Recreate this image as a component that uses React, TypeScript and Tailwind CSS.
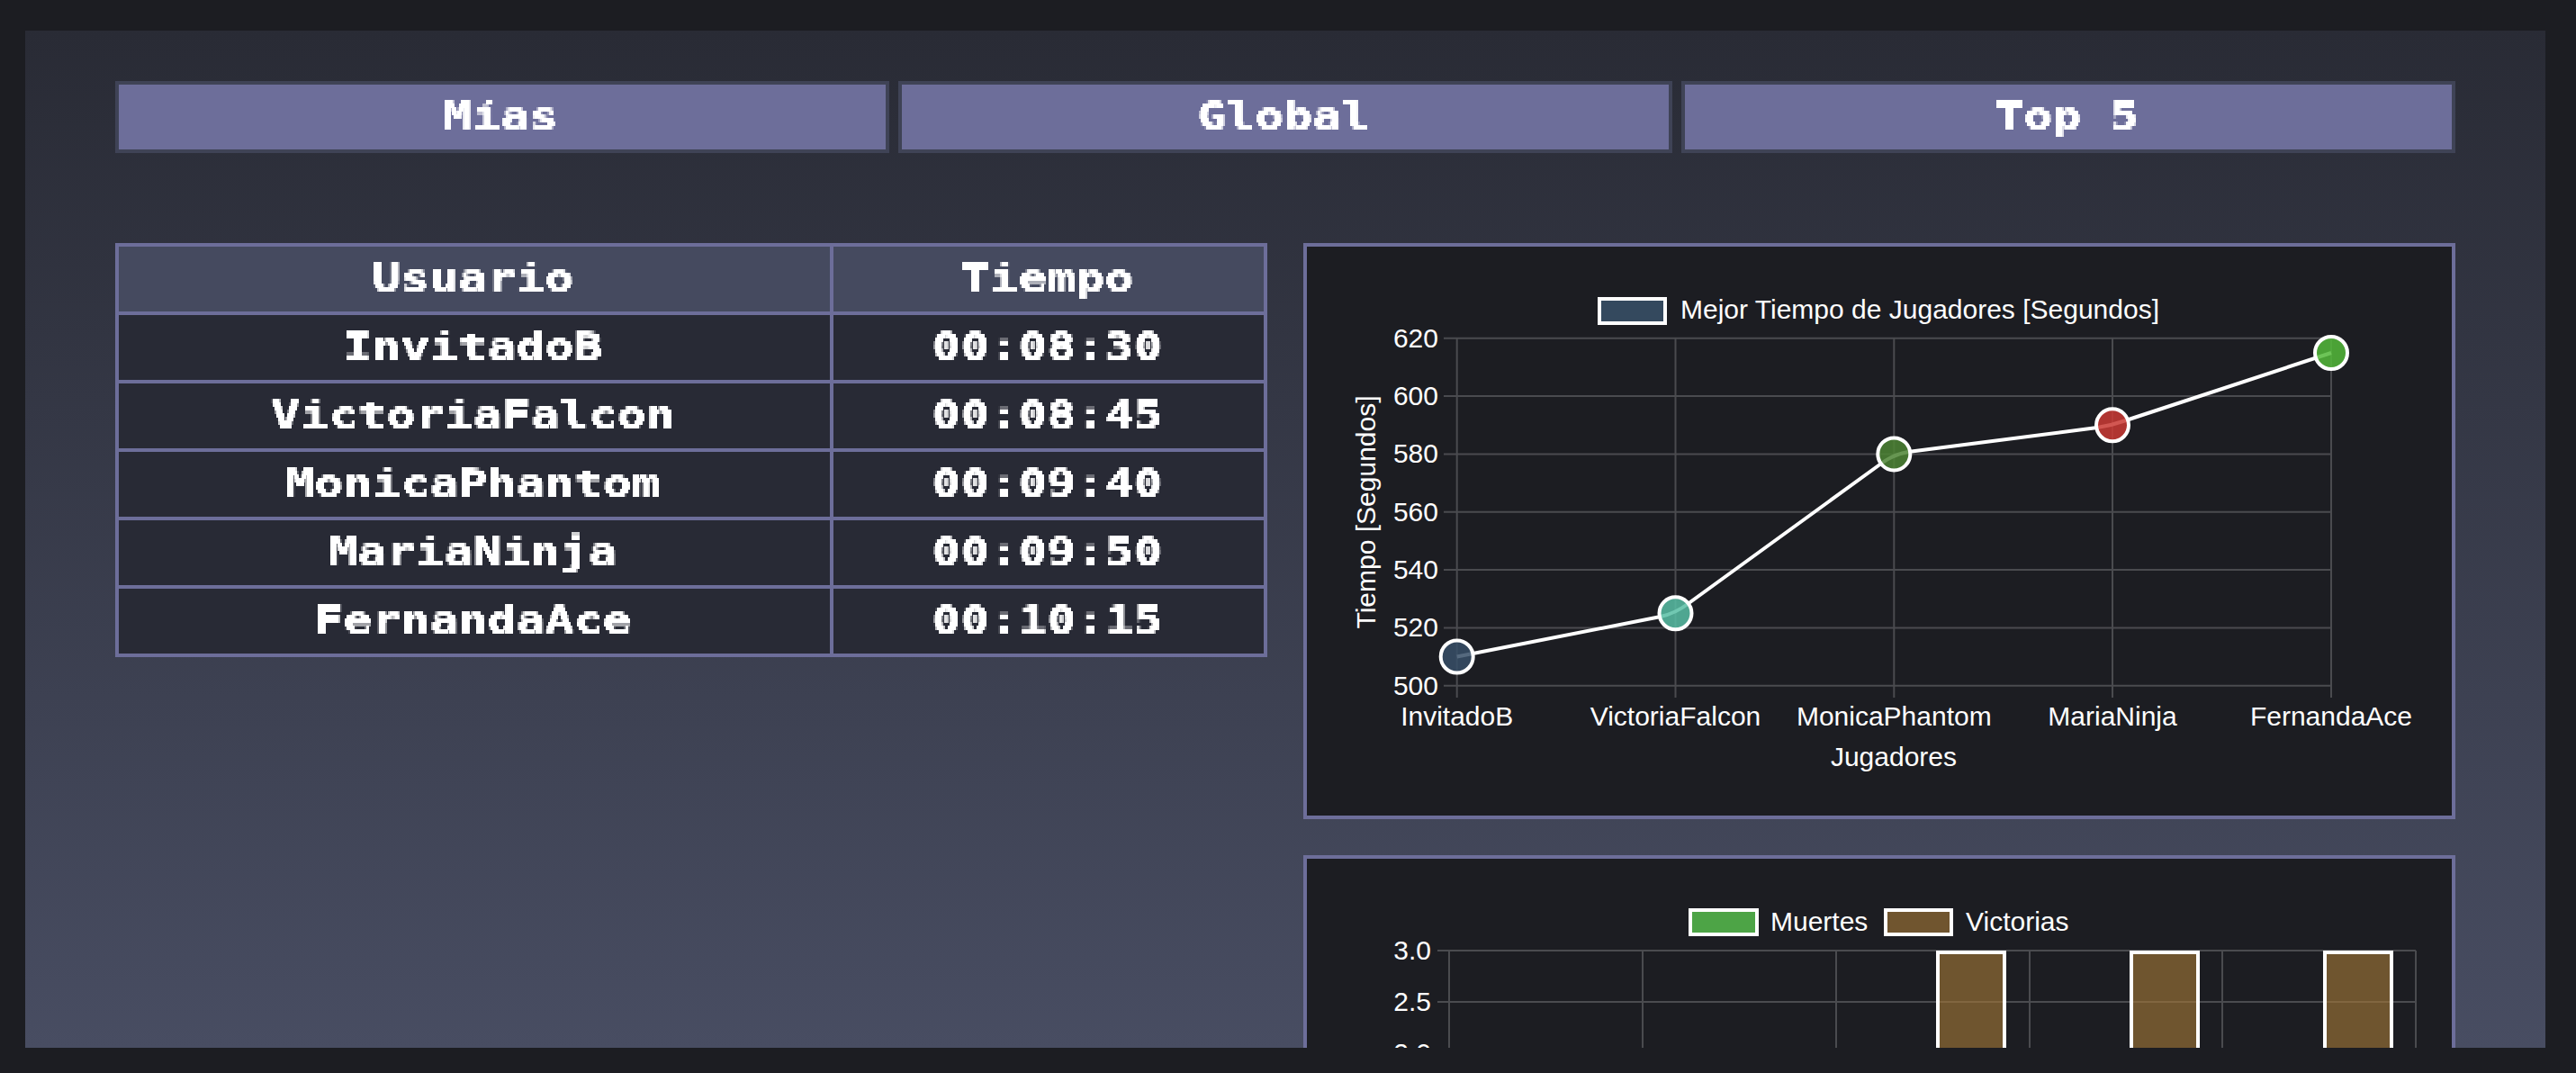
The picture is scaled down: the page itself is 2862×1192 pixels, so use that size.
import React from 'react';

const sans = '"Liberation Sans", Arial, sans-serif';

const rows = [
  ['InvitadoB', '00:08:30'],
  ['VictoriaFalcon', '00:08:45'],
  ['MonicaPhantom', '00:09:40'],
  ['MariaNinja', '00:09:50'],
  ['FernandaAce', '00:10:15'],
];

const PixelText: React.FC<{ children: React.ReactNode }> = ({ children }) => (
  <span className="inline-block pb-[2px] pr-[3px] [filter:url(#pixel-text)]">
    <span className="inline-block scale-x-[1.33] font-['DejaVu_Sans_Mono',monospace] text-[40px] font-bold leading-[44px] text-white">
      {children}
    </span>
  </span>
);

const LineChart: React.FC = () => {
  const xs = [1618.7, 1861.5, 2104.3, 2347, 2590];
  const ys = [375.7, 440, 504.4, 568.8, 633, 697.4, 761.7];
  const ticks = ['620', '600', '580', '560', '540', '520', '500'];
  const names = ['InvitadoB', 'VictoriaFalcon', 'MonicaPhantom', 'MariaNinja', 'FernandaAce'];
  const pts = [
    { x: 1618.7, y: 729.5, fill: '#374f67' },
    { x: 1861.5, y: 681.3, fill: '#58bea4' },
    { x: 2104.3, y: 504.4, fill: '#4c8434' },
    { x: 2347, y: 472.3, fill: '#ca3934' },
    { x: 2590, y: 392, fill: '#54ba3a' },
  ];
  return (
    <svg viewBox="1452 274 1272 632" className="block h-[632px] w-[1272px]" fontFamily={sans} fontSize="30" fill="#ffffff">
      {ys.map((y) => (
        <line key={y} x1="1604" x2="2590" y1={y} y2={y} stroke="#4a4b4f" strokeWidth="2" />
      ))}
      {xs.map((x) => (
        <line key={x} x1={x} x2={x} y1="375" y2="775" stroke="#4a4b4f" strokeWidth="2" />
      ))}
      {ticks.map((t, i) => (
        <text key={t} x="1598" y={ys[i] + 10} textAnchor="end">{t}</text>
      ))}
      {names.map((n, i) => (
        <text key={n} x={xs[i]} y="806" textAnchor="middle">{n}</text>
      ))}
      <text x="2104" y="851" textAnchor="middle">Jugadores</text>
      <text transform="translate(1528 569) rotate(-90)" textAnchor="middle">Tiempo [Segundos]</text>
      <rect x="1777" y="332" width="73" height="27" fill="#34495e" stroke="#ffffff" strokeWidth="4" />
      <text x="1867" y="354">Mejor Tiempo de Jugadores [Segundos]</text>
      <path
        d="M1618.7 729.5 L1845 685 Q1861.5 681.3 1875 671 L2090 515 Q2104.3 504.4 2120 502 L2330 475 Q2347 472.3 2362 467 L2590 392"
        fill="none"
        stroke="#ffffff"
        strokeWidth="4"
      />
      {pts.map((p) => (
        <circle key={p.x} cx={p.x} cy={p.y} r="18" fill={p.fill} fillOpacity="0.85" stroke="#ffffff" strokeWidth="4" />
      ))}
    </svg>
  );
};

const BarChart: React.FC = () => {
  const xs = [1610, 1825, 2040, 2255, 2469, 2684];
  const ys = [1056, 1113, 1170];
  return (
    <svg viewBox="1452 954 1272 632" className="block h-[632px] w-[1272px]" fontFamily={sans} fontSize="30" fill="#ffffff">
      {ys.map((y) => (
        <line key={y} x1="1597" x2="2684" y1={y} y2={y} stroke="#4a4b4f" strokeWidth="2" />
      ))}
      {xs.map((x) => (
        <line key={x} x1={x} x2={x} y1="1056" y2="1500" stroke="#4a4b4f" strokeWidth="2" />
      ))}
      {['3.0', '2.5', '2.0'].map((t, i) => (
        <text key={t} x="1590" y={ys[i] + 10} textAnchor="end">{t}</text>
      ))}
      <rect x="1878" y="1011" width="74" height="27" fill="#4da446" stroke="#ffffff" strokeWidth="4" />
      <text x="1967" y="1034">Muertes</text>
      <rect x="2095" y="1011" width="73" height="27" fill="#70552f" stroke="#ffffff" strokeWidth="4" />
      <text x="2184" y="1034">Victorias</text>
      {[2153, 2368, 2583].map((x) => (
        <rect key={x} x={x} y="1058" width="74" height="442" fill="#a37737" fillOpacity="0.62" stroke="#ffffff" strokeWidth="4" />
      ))}
    </svg>
  );
};

export default function App() {
  return (
    <div className="h-screen w-screen overflow-hidden bg-[#1c1d22] pb-[28px] pl-[28px] pr-[34px] pt-[34px]">
      <svg width="0" height="0" className="absolute">
        <filter id="pixel-text" x="-50%" y="-10%" width="200%" height="120%" colorInterpolationFilters="sRGB">
          <feFlood x="1" y="2" width="1" height="1" floodColor="#ffffff" />
          <feComposite width="2" height="4" />
          <feTile result="grid" />
          <feComposite in="SourceGraphic" in2="grid" operator="in" />
          <feMorphology operator="dilate" radius="1 2" />
        </filter>
      </svg>
      <div className="h-full w-full overflow-hidden bg-gradient-to-b from-[#292b35] to-[#484d62] px-[100px] pt-[56px]">
        <div className="flex gap-[10px]">
          {['Mías', 'Global', 'Top 5'].map((label) => (
            <button key={label} className="h-[80px] flex-1 border-4 border-[#3f4356] bg-[#6d6e9a]">
              <PixelText>{label}</PixelText>
            </button>
          ))}
        </div>

        <div className="mt-[100px] grid grid-cols-2 items-start gap-x-[40px]">
          <table className="w-full table-fixed border-collapse border-4 border-[#6d6e9a]">
            <thead>
              <tr className="h-[76px] bg-[#454a5f]">
                <th className="w-[62.2%] border-4 border-[#6d6e9a] p-0 font-normal"><PixelText>Usuario</PixelText></th>
                <th className="border-4 border-[#6d6e9a] p-0 font-normal"><PixelText>Tiempo</PixelText></th>
              </tr>
            </thead>
            <tbody>
              {rows.map(([name, time]) => (
                <tr key={name} className="h-[76px] bg-[#282a35]">
                  <td className="border-4 border-[#6d6e9a] p-0 text-center"><PixelText>{name}</PixelText></td>
                  <td className="border-4 border-[#6d6e9a] p-0 text-center"><PixelText>{time}</PixelText></td>
                </tr>
              ))}
            </tbody>
          </table>

          <div className="flex flex-col gap-[40px]">
            <div className="h-[640px] border-4 border-[#6d6e9a] bg-[#1c1d22]"><LineChart /></div>
            <div className="h-[640px] border-4 border-[#6d6e9a] bg-[#1c1d22]"><BarChart /></div>
          </div>
        </div>
      </div>
    </div>
  );
}
